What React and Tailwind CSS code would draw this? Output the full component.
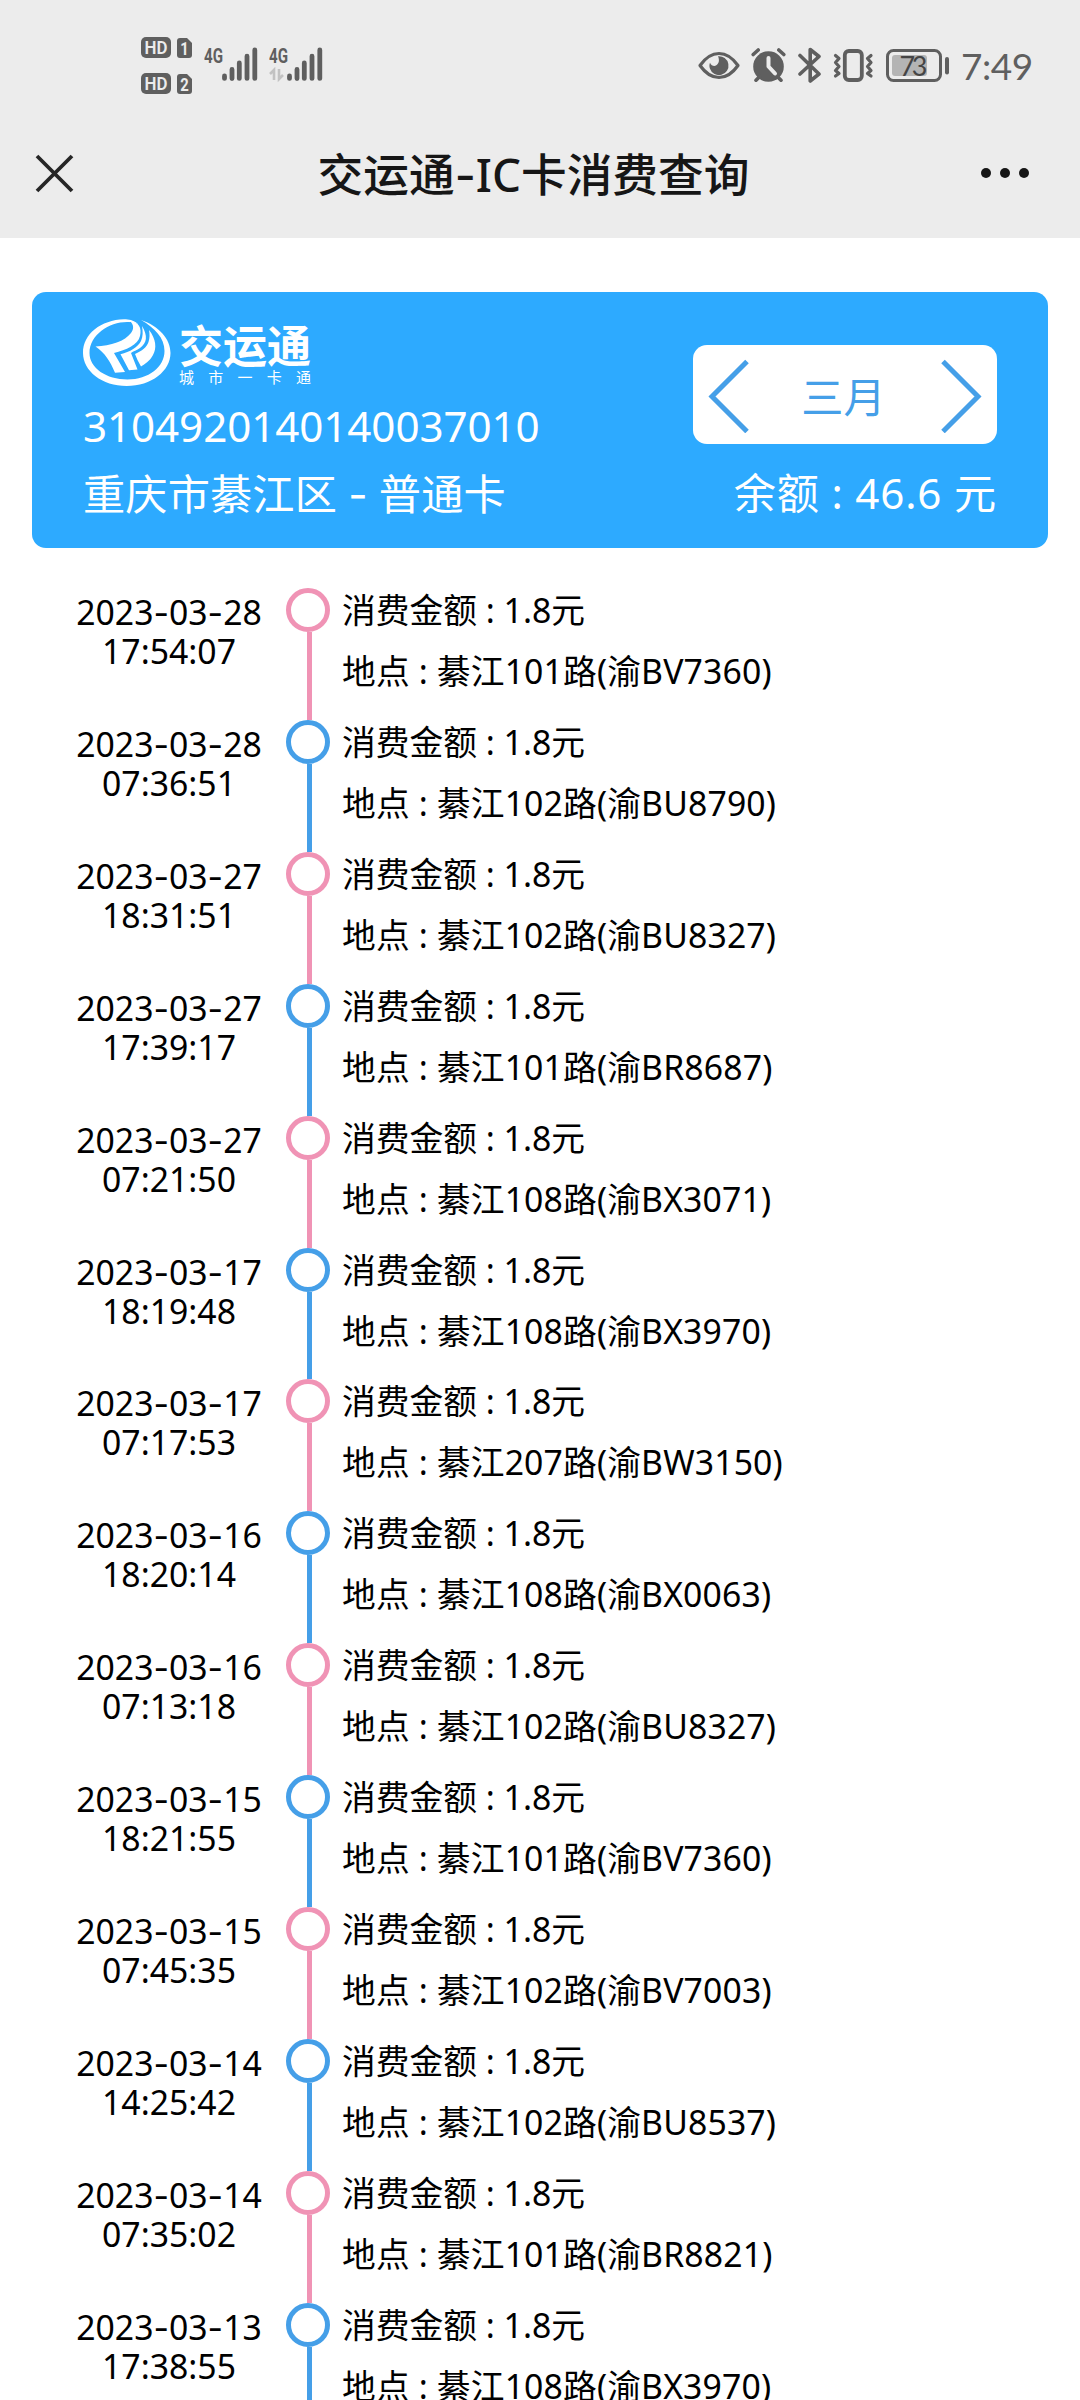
import React from 'react';

const records = [
    { date: '2023-03-28', time: '17:54:07', amount: '1.8', place: '綦江101路(渝BV7360)' },
    { date: '2023-03-28', time: '07:36:51', amount: '1.8', place: '綦江102路(渝BU8790)' },
    { date: '2023-03-27', time: '18:31:51', amount: '1.8', place: '綦江102路(渝BU8327)' },
    { date: '2023-03-27', time: '17:39:17', amount: '1.8', place: '綦江101路(渝BR8687)' },
    { date: '2023-03-27', time: '07:21:50', amount: '1.8', place: '綦江108路(渝BX3071)' },
    { date: '2023-03-17', time: '18:19:48', amount: '1.8', place: '綦江108路(渝BX3970)' },
    { date: '2023-03-17', time: '07:17:53', amount: '1.8', place: '綦江207路(渝BW3150)' },
    { date: '2023-03-16', time: '18:20:14', amount: '1.8', place: '綦江108路(渝BX0063)' },
    { date: '2023-03-16', time: '07:13:18', amount: '1.8', place: '綦江102路(渝BU8327)' },
    { date: '2023-03-15', time: '18:21:55', amount: '1.8', place: '綦江101路(渝BV7360)' },
    { date: '2023-03-15', time: '07:45:35', amount: '1.8', place: '綦江102路(渝BV7003)' },
    { date: '2023-03-14', time: '14:25:42', amount: '1.8', place: '綦江102路(渝BU8537)' },
    { date: '2023-03-14', time: '07:35:02', amount: '1.8', place: '綦江101路(渝BR8821)' },
    { date: '2023-03-13', time: '17:38:55', amount: '1.8', place: '綦江108路(渝BX3970)' }
];

// Inter has the wider hyphen
function Dash() {
    return <span className="font-['Inter']">-</span>;
}

function SimBadge({ num }) {
    return (
        <div className="flex gap-[6px] items-start">
            <svg width="30" height="21" viewBox="0 0 30 21">
                <rect width="30" height="21" rx="5" fill="#5f5f5f" />
                <text x="15" y="17" fontSize="18.500" fontWeight="600" textAnchor="middle" textLength="23" lengthAdjust="spacingAndGlyphs" fill="#ececec" fontFamily="Roboto">HD</text>
            </svg>
            <svg width="15" height="21" viewBox="0 0 15 21">
                <path d="M3 1h7l5 5v12a3 3 0 0 1-3 3H3a3 3 0 0 1-3-3V4a3 3 0 0 1 3-3z" fill="#5f5f5f" />
                <text x="7.5" y="17.5" fontSize="18" fontWeight="700" textAnchor="middle" textLength="8.5" lengthAdjust="spacingAndGlyphs" fill="#ececec" fontFamily="Roboto">{num}</text>
            </svg>
        </div>
    );
}

function Signal({ data }) {
    return (
        <svg width="54" height="36" viewBox="0 0 54 36">
            <text x="0" y="16" fontSize="20.5" fontWeight="700" textLength="19" lengthAdjust="spacingAndGlyphs" fill="#5f5f5f" fontFamily="Roboto">4G</text>
            {data && (
                <g fill="none" stroke="#c2c2c2" strokeWidth="2.6">
                    <path d="M1 27l4-4v10" />
                    <path d="M10 22v10l4-4" />
                </g>
            )}
            <g stroke="#5f5f5f" strokeWidth="4.8" strokeLinecap="round">
                <path d="M20.5 29v2.4M28 22.5v9M35.3 16v15.4M43 9.2v22.2M50.8 3v28.4" />
            </g>
        </svg>
    );
}

function StatusBar() {
    return (
        <div className="h-[109px] flex items-start text-[#5f5f5f]">
            <div className="pl-[141px] pt-[37px] flex flex-col gap-[15px]">
                <SimBadge num="1" />
                <SimBadge num="2" />
            </div>
            <div className="pl-[12px] pt-[47px] flex gap-[11px]">
                <Signal />
                <Signal data />
            </div>
            <div className="ml-auto pr-[50px] pt-[47px] flex">
                <svg width="42" height="36" viewBox="0 0 42 36" className="mr-[11px]">
                    <path d="M2 18.500C8 10 14 6.500 21 6.500s13 3.500 19 12c-6 8.500-12 12-19 12s-13-3.500-19-12z" fill="none" stroke="#5f5f5f" strokeWidth="3.200" strokeLinejoin="round" />
                    <path d="M20 9.200a9.500 9.500 0 1 1-8 12.500c-.8-2-.8-4 0-6 1.300 3 4.200 4 6.300 2.600 2.900-2 3.300-5.500 1.700-9.100z" fill="#5f5f5f" />
                </svg>
                <svg width="36" height="36" viewBox="0 0 36 36" className="mr-[11px]">
                    <circle cx="17.500" cy="19.500" r="15.300" fill="#5f5f5f" />
                    <path d="M2.200 7.500l5-4.500M32.800 7.500l-5-4.500M5 33.200l4-4M30 33.200l-4-4" stroke="#5f5f5f" strokeWidth="3.600" strokeLinecap="round" />
                    <path d="M17.500 11v8.500l6.500 7" fill="none" stroke="#ececec" strokeWidth="4" strokeLinecap="round" strokeLinejoin="round" />
                </svg>
                <svg width="24" height="38" viewBox="0 0 24 38" className="mr-[11px]">
                    <path d="M2 8.500l19 18.500-8.800 7V2.500l8.800 7L2 27" fill="none" stroke="#5f5f5f" strokeWidth="3.600" strokeLinecap="round" strokeLinejoin="round" />
                </svg>
                <svg width="42" height="36" viewBox="0 0 42 36" className="mr-[11px]">
                    <rect x="11.800" y="4" width="17" height="29" rx="4" fill="none" stroke="#5f5f5f" strokeWidth="3.800" />
                    <path d="M2.500 8.500l3.500 3-3.500 4 3.500 4-3.500 4 3.500 3-3.500 2.500M38 8.500l-3.500 3 3.500 4-3.500 4 3.500 4-3.500 3 3.500 2.500" fill="none" stroke="#5f5f5f" strokeWidth="3.200" strokeLinecap="round" strokeLinejoin="round" />
                </svg>
                <svg width="64" height="36" viewBox="0 0 64 36" className="mr-[11px]">
                    <rect x="1.500" y="3.500" width="53" height="30" rx="6" fill="none" stroke="#5f5f5f" strokeWidth="3" />
                    <rect x="6" y="8" width="35" height="21" rx="3" fill="#b4b4b4" />
                    <rect x="59" y="10" width="4" height="17.500" rx="2" fill="#5f5f5f" />
                    <text x="27.500" y="28.500" fontSize="27" textAnchor="middle" fill="#454545" fontFamily="Lato" textLength="28">73</text>
                </svg>
                <div className="w-[69px] h-[36px] text-[37px] leading-[38px] font-['Lato'] tracking-[-0.5px] whitespace-nowrap">7:49</div>
            </div>
        </div>
    );
}

function TitleBar() {
    return (
        <div className="h-[129px] flex items-start justify-between">
            <svg width="40" height="40" viewBox="0 0 40 40" className="ml-[35px] mt-[45px]">
                <path d="M2 2l35 35M37 2L2 37" stroke="#262626" strokeWidth="3.800" />
            </svg>
            <h1 className="text-[45.7px] leading-[60px] mt-[35px] pl-[12px] font-medium text-[#161616] whitespace-nowrap">交运通<Dash />IC卡消费查询</h1>
            <svg width="52" height="12" viewBox="0 0 52 12" className="mr-[48px] mt-[58px]">
                <circle cx="6" cy="6" r="5" fill="#161616" />
                <circle cx="25" cy="6" r="5" fill="#161616" />
                <circle cx="44" cy="6" r="5" fill="#161616" />
            </svg>
        </div>
    );
}

function Logo() {
    return (
        <div className="flex h-[70px]">
            <svg width="90" height="70" viewBox="0 0 90 70">
                {/* ring, open at the top right */}
                <path fill="#fff" d="M55 6C50 2 46 1.300 41 1.300 18 2 0 16 0 35c0 18 19 33 43.700 33S87.500 53 87.500 35C87.500 21 76 8 58 2c14 8 23.500 18 23.500 31 0 16-16 28.500-37 28.500S6.500 50 6.500 35C6.500 17 26 4 44 4c6 0 9 1 11 2z" />
                <path fill="#fff" d="M12.500 28.500C28 28 42 23 48 15c3-4 3-8-1-12 9 1 12 7 10 15-2 9-14 14-26 17l11 19-10 .7C27 43 22 35 12.500 28.500z" />
                <path fill="#fff" d="M59 8c6 10 5 17-2 22-3 2-7 3.500-9 5l6.500 16.500-8.500.7-8.500-16C47 34 55 29 58 23c2-5 2-9 1-15z" />
                <path fill="#fff" d="M66 12c7 9 8 18 4 25-3 6-8 9-12 11.500L54.500 42 52 36c7-3 12-7 13.500-12 1.300-4 1.300-8 .5-12z" />
            </svg>
            <div className="pl-[6px] pt-[7px] text-white">
                <div className="text-[44px] leading-[42px] h-[43px] font-bold whitespace-nowrap">交运通</div>
                <div className="flex justify-between w-[132px] text-[15px] leading-[18px]">
                    <span>城</span>
                    <span>市</span>
                    <span>一</span>
                    <span>卡</span>
                    <span>通</span>
                </div>
            </div>
        </div>
    );
}

function CardPanel() {
    return (
        <div className="mx-[32px] h-[256px] rounded-[14px] bg-[#2daaff] pl-[51px] pr-[51px] flex justify-between text-white text-[42.2px] whitespace-nowrap">
            <div className="pt-[26px]">
                <Logo />
                <div className="h-[70px] leading-[75px] tracking-[-0.1px]">3104920140140037010</div>
                <div className="h-[66px] leading-[71px] tracking-[0.15px]">重庆市綦江区 <Dash /> 普通卡</div>
            </div>
            <div className="pt-[53px]">
                <div className="w-[304px] h-[99px] rounded-[14px] bg-white flex items-center justify-between px-[14px] text-[#459fe8]">
                    <svg width="44" height="76" viewBox="0 0 44 76">
                        <path d="M40 5L5 40l35 35" transform="translate(0 -.5)" fill="none" stroke="#459fe8" strokeWidth="5" />
                    </svg>
                    <span className="leading-[60px] pt-[4px] pr-[3px]">三月</span>
                    <svg width="44" height="76" viewBox="0 0 44 76">
                        <path d="M4 5l35 35L4 75" transform="translate(0 -.5)" fill="none" stroke="#459fe8" strokeWidth="5" />
                    </svg>
                </div>
                <div className="pt-[14px] leading-[70px] text-right tracking-[0.8px]">余额 : 46.6 元</div>
            </div>
        </div>
    );
}

function RecordRow({ record, pink }) {
    return (
        <div className="h-[131.92px] flex text-black text-[33.75px] whitespace-nowrap">
            <div className="w-[254px] ml-[42px] -mr-[10px] pt-[5px] leading-[39px] text-center">
                <div>{record.date.split('-').map((part, i) => (
                    <React.Fragment key={i}>{i > 0 && <Dash />}{part}</React.Fragment>
                ))}</div>
                <div>{record.time}</div>
            </div>
            <div className="w-[44px] flex flex-col items-center">
                <div className={`w-[44px] h-[44px] shrink-0 rounded-full border-[5px] ${pink ? 'border-[#f093b5]' : 'border-[#459fe8]'}`}></div>
                <div className={`w-[5px] flex-1 ml-[3px] ${pink ? 'bg-[#f093b5]' : 'bg-[#459fe8]'}`}></div>
            </div>
            <div className="pl-[12px]">
                <div className="h-[61px] leading-[45px]">消费金额 : {record.amount}元</div>
                <div className="leading-[45px] tracking-[0.15px]">地点 : {record.place}</div>
            </div>
        </div>
    );
}

function App() {
    return (
        <div className="w-[1080px] h-[2400px] overflow-hidden bg-white font-['Noto_Sans','Noto_Sans_CJK_SC',sans-serif]">
            <div className="bg-[#ececec]">
                <StatusBar />
                <TitleBar />
            </div>
            <div className="pt-[54px]">
                <CardPanel />
                <div className="pt-[40px]">
                    {records.map((record, i) => (
                        <RecordRow key={i} record={record} pink={i % 2 === 0} />
                    ))}
                </div>
            </div>
        </div>
    );
}

export default App;
